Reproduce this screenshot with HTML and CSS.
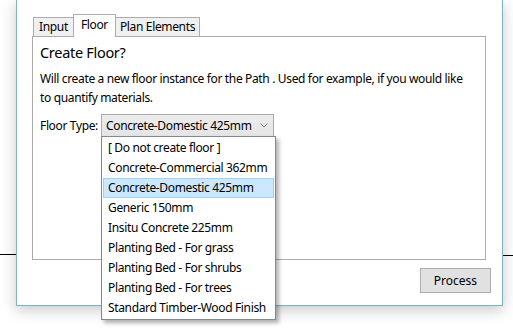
FILE: index.html
```html
<!DOCTYPE html>
<html>
<head>
<meta charset="utf-8">
<link rel="stylesheet" href="styles.css">
</head>
<body>
<div class="stage">
  <div class="line line-left"></div>
  <div class="line line-right"></div>
  <div class="window">
    <div class="tabs">
      <div class="tab">Input</div>
      <div class="tab tab-active">Floor</div>
      <div class="tab">Plan Elements</div>
    </div>
    <div class="panel">
      <div class="title">Create Floor?</div>
      <p class="desc">Will create a new floor instance for the Path . Used for example, if you would like to quantify materials.</p>
      <div class="row">
        <span class="label">Floor Type:</span>
        <div class="combo">
          <span class="combo-text">Concrete-Domestic 425mm</span>
          <svg class="chev" width="8" height="5" viewBox="0 0 8 5"><path d="M0.5 0.5 L4 4 L7.5 0.5" fill="none" stroke="#7a7a7a" stroke-width="1"/></svg>
          <ul class="list">
            <li>[ Do not create floor ]</li>
            <li>Concrete-Commercial 362mm</li>
            <li class="sel">Concrete-Domestic 425mm</li>
            <li>Generic 150mm</li>
            <li>Insitu Concrete 225mm</li>
            <li>Planting Bed - For grass</li>
            <li>Planting Bed - For shrubs</li>
            <li>Planting Bed - For trees</li>
            <li>Standard Timber-Wood Finish</li>
          </ul>
        </div>
      </div>
    </div>
    <div class="footer">
      <button class="btn">Process</button>
    </div>
  </div>
</div>
</body>
</html>
```
FILE: styles.css
```css
* { box-sizing: border-box; }
html, body { margin: 0; padding: 0; background: #fff; }
body {
  font-family: "Noto Sans", "Open Sans", sans-serif;
  font-size: 12px;
  letter-spacing: -0.35px;
  color: #000;
  width: 513px;
  height: 335px;
  overflow: hidden;
}
.stage {
  position: relative;
  width: 513px;
  height: 335px;
  padding-left: 16px;
}
.line {
  position: absolute;
  height: 1px;
  background: #000;
}
.line-left { left: 0; width: 16px; top: 254px; }
.line-right { left: 503px; width: 10px; top: 255px; }
.window {
  position: relative;
  width: 487px;
  height: 306px;
  background: #fff;
  border: 1px solid #7ab4c7;
  border-top: none;
  box-shadow: 0 4px 14px rgba(0,0,0,0.22);
  padding: 14px 0 0 15px;
  display: flex;
  flex-direction: column;
}
.tabs {
  display: flex;
  align-items: flex-end;
  height: 22px;
  padding-left: 1px;
}
.tab {
  height: 19px;
  padding: 0 5px;
  background: #f0f0f0;
  border: 1px solid #acacac;
  border-bottom: none;
  margin-right: -1px;
  line-height: 17px;
  white-space: nowrap;
}
.tab:last-child { padding: 0 4px; }
.tab-active {
  height: 23px;
  background: #fff;
  position: relative;
  z-index: 2;
  margin-bottom: -1px;
  padding: 0 7px;
  line-height: 19px;
}
.panel {
  width: 454px;
  height: 224px;
  border: 1px solid #acacac;
  padding: 5px 7px 0 7px;
}
.title {
  font-size: 14.5px;
  line-height: 20px;
  letter-spacing: -0.3px;
}
.desc {
  width: 428px;
  margin: 7px 0 0 0;
  line-height: 19px;
}
.row {
  display: flex;
  align-items: center;
  margin-top: 7px;
  white-space: nowrap;
}
.label { width: 61px; }
.combo {
  position: relative;
  width: 173px;
  height: 23px;
  background: linear-gradient(#ececec, #e5e5e5);
  border: 1px solid #acacac;
  display: flex;
  align-items: center;
  padding-left: 4px;
}
.combo-text { flex: 1; }
.chev { margin-right: 5px; }
.list {
  position: absolute;
  left: -1px;
  top: 21px;
  width: 175px;
  margin: 0;
  padding: 1px 1px;
  list-style: none;
  background: #fff;
  border: 1px solid #828790;
  box-shadow: 3px 3px 4px rgba(0,0,0,0.3);
  z-index: 5;
}
.list li {
  height: 20px;
  line-height: 18px;
  padding: 0 4px;
  border: 1px solid transparent;
  white-space: nowrap;
}
.list li.sel {
  background: #cce8ff;
  border-color: #99d1ff;
}
.footer {
  display: flex;
  justify-content: flex-end;
  padding: 8px 11px 0 0;
}
.btn {
  width: 71px;
  height: 25px;
  font: inherit;
  font-size: 12px;
  background: #e1e1e1;
  border: 1px solid #adadad;
  color: #000;
  padding: 0;
}
```
